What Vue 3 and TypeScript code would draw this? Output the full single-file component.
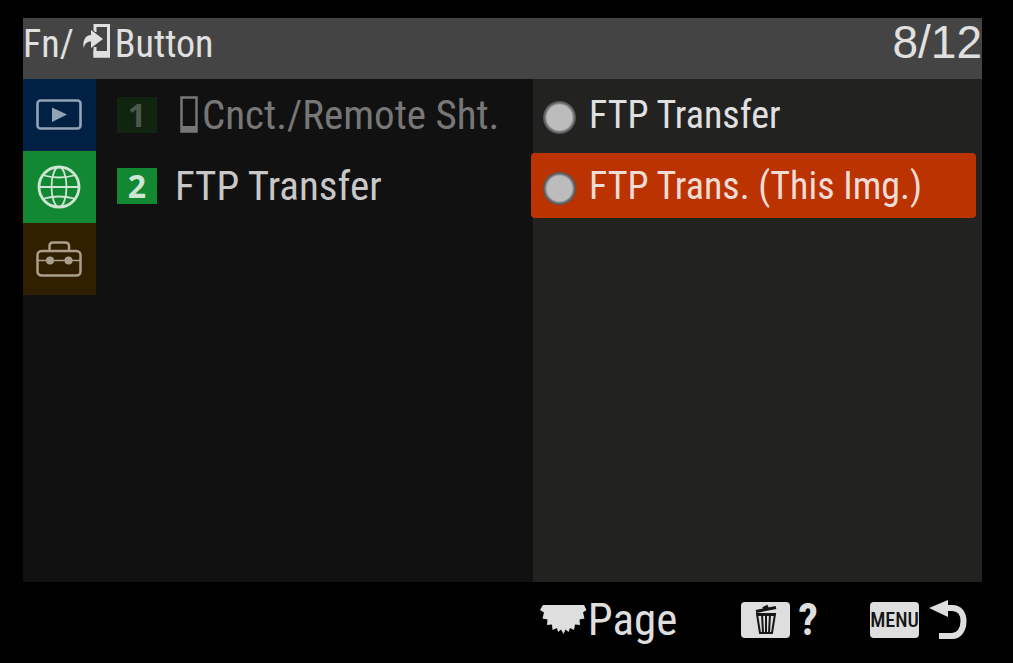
<script setup lang="ts">
import { ref } from 'vue'

interface Option {
  id: string
  label: string
}

const options: Option[] = [
  { id: 'all', label: 'FTP Transfer' },
  { id: 'this', label: 'FTP Trans. (This Img.)' },
]
const selected = ref('this')
</script>

<template>
  <div class="screen">
    <header class="title-bar">
      <h1 class="title">
        <span>Fn/</span>
        <svg class="send-icon" width="28" height="36" viewBox="0 0 28 36" aria-hidden="true">
          <path d="M12 9V2.500H25.500V33H12V24" fill="none" stroke="#e0e0e0" stroke-width="3" />
          <path d="M10.500 28H27V34.500H10.500Z" fill="#e0e0e0" />
          <path
            d="M0.500 25C-0.500 17 3 12 8 12V7L20 16L8 25V18.500C5 18 2 20 0.500 25Z"
            fill="#e0e0e0"
            stroke="#444"
            stroke-width="2"
            paint-order="stroke"
          />
        </svg>
        <span>Button</span>
      </h1>
      <span class="counter">8/12</span>
    </header>

    <main class="content">
      <nav class="tabs" aria-label="Menu groups">
        <button class="tab playback" type="button" aria-label="Playback">
          <svg width="46" height="32" viewBox="0 0 46 32" aria-hidden="true">
            <rect x="1.500" y="1.500" width="43" height="28" rx="3" fill="none" stroke="#93a3b5" stroke-width="2.600" />
            <path d="M16 8.500L31 15.500L16 23Z" fill="#93a3b5" />
          </svg>
        </button>
        <button class="tab network" type="button" aria-label="Network" aria-current="true">
          <svg width="44" height="44" viewBox="0 0 44 44" fill="none" stroke="#d0e5d3" aria-hidden="true">
            <circle cx="22" cy="22" r="20" stroke-width="2.800" />
            <ellipse cx="22" cy="22" rx="7.500" ry="20" stroke-width="1.800" />
            <path d="M2 22H42M7 10.500Q22 14.500 37 10.500M7 33.500Q22 29.500 37 33.500" stroke-width="1.800" />
          </svg>
        </button>
        <button class="tab setup" type="button" aria-label="Setup">
          <svg width="46" height="36" viewBox="0 0 46 36" fill="none" stroke="#ab9e8d" aria-hidden="true">
            <rect x="1.500" y="10" width="43" height="24.500" rx="4" stroke-width="2.500" />
            <path d="M13.500 10V5Q13.500 1.500 17 1.500H29Q33 1.500 33 5V10" stroke-width="2.500" />
            <path d="M2 19.500H44" stroke-width="1.600" />
            <circle cx="14" cy="19.500" r="4" fill="#ab9e8d" stroke="none" />
            <circle cx="32.500" cy="19.500" r="4" fill="#ab9e8d" stroke="none" />
          </svg>
        </button>
      </nav>

      <section class="buttons" aria-label="Button assignments">
        <button class="entry dimmed" type="button" disabled>
          <span class="badge">1</span>
          <svg class="phone-icon" width="18" height="37" viewBox="0 0 18 37" aria-hidden="true">
            <rect x="1.500" y="1.500" width="15" height="34" fill="none" stroke="#777" stroke-width="2.500" />
            <path d="M1 30H17V36H1Z" fill="#777" />
          </svg>
          <span>Cnct./Remote Sht.</span>
        </button>
        <button class="entry" type="button">
          <span class="badge">2</span>
          <span class="entry-name">FTP Transfer</span>
        </button>
      </section>

      <section class="options" aria-label="Functions">
        <label
          v-for="option in options"
          :key="option.id"
          class="option"
          :class="{ active: selected === option.id }"
          :for="option.id"
        >
          <input :id="option.id" v-model="selected" class="dot" type="radio" name="function" :value="option.id" />
          <span>{{ option.label }}</span>
        </label>
      </section>
    </main>

    <footer class="guide">
      <button class="hint" type="button">
        <svg width="48" height="30" viewBox="0 0 48 30" aria-hidden="true">
          <path
            d="M3 0H44L46.500 5L43 7.500L44.500 13.500L39.500 14.500L40 20L35 19.500L34 25L30 23L28.500 27L25.500 24.500L23.500 29L21 24.500L18 27L17 23L12.500 25L12 19.500L7 20L7.500 14.500L2.500 13.500L4 7.500L0 5Z"
            fill="#dedede"
          />
        </svg>
        <span>Page</span>
      </button>
      <button class="hint help" type="button" aria-label="Help">
        <span class="key">
          <svg width="24" height="32" viewBox="0 0 24 32" fill="none" stroke="#151515" aria-hidden="true">
            <path d="M2 7.500L22 3.500M9 4.500L14 2" stroke-width="3" />
            <path d="M3 10L6 29H18L21 10Z" stroke-width="2" />
            <path d="M8 10L9 29M12 10V29M16 10L15 29" stroke-width="2" />
            <path d="M3 11H21" stroke-width="2" />
          </svg>
        </span>
        <span class="question">?</span>
      </button>
      <button class="hint" type="button" aria-label="Menu: back">
        <span class="key menu-key">MENU</span>
        <svg class="back-icon" width="38" height="40" viewBox="0 0 38 40" aria-hidden="true">
          <path d="M0 8L19 0V17Z" fill="#dedede" />
          <path d="M17 8H23C31 8 34.500 14 34.500 21C34.500 30 30 36 23 36H10" fill="none" stroke="#dedede" stroke-width="6" />
        </svg>
      </button>
    </footer>
  </div>
</template>

<style>
body {
  margin: 0;
  background: #000;
}
</style>

<style scoped>
.screen {
  box-sizing: border-box;
  min-height: 100vh;
  padding: 18px 31px 0 23px;
  display: flex;
  flex-direction: column;
  background: #000;
  color: #e0e0e0;
  font-family: "Roboto Condensed", "Liberation Sans Narrow", "Arial Narrow", "Liberation Sans", sans-serif;
  font-size: 38px;
  line-height: 52px;
}

button {
  margin: 0;
  padding: 0;
  border: 0;
  background: none;
  color: inherit;
  font: inherit;
  text-align: left;
}

.title-bar {
  height: 61px;
  display: flex;
  justify-content: space-between;
  background: #444;
}

.title {
  margin: 0;
  display: flex;
  height: 52px;
  font: inherit;
}

.send-icon {
  margin: 5px 4px 0 9px;
}

.counter {
  font-family: "Liberation Sans", sans-serif;
  font-size: 46px;
  line-height: 48px;
}

.content {
  flex: 1;
  display: flex;
  background: #111;
}

.tabs {
  width: 73px;
  flex: none;
}

.tab {
  width: 100%;
  height: 72px;
  padding-right: 2px;
  display: flex;
  align-items: center;
  justify-content: center;
}

.playback {
  background: #002044;
}

.network {
  background: #128832;
}

.setup {
  background: #302000;
}

.buttons {
  flex: 437;
  min-width: 0;
}

.entry {
  width: 100%;
  height: 71px;
  padding-left: 21px;
  display: flex;
  align-items: center;
  font-size: 41px;
  color: #c8c8c8;
  white-space: nowrap;
}

.dimmed {
  color: #777;
}

.badge {
  width: 40px;
  height: 36px;
  background: #128832;
  color: #d0e5d3;
  font-family: "Open Sans", sans-serif;
  font-size: 32px;
  font-weight: 700;
  line-height: 36px;
  text-align: center;
}

.dimmed .badge {
  background: #102410;
  color: #4c5a4c;
}

.phone-icon {
  margin: 0 4px 0 23px;
}

.entry-name {
  margin-left: 18px;
}

.options {
  flex: 449;
  min-width: 0;
  padding-top: 3px;
  display: flex;
  flex-direction: column;
  gap: 6px;
  background: #222221;
}

.option {
  height: 65px;
  margin: 0 6px 0 -2px;
  padding-left: 12px;
  display: flex;
  align-items: center;
  gap: 13px;
  border-radius: 4px;
  white-space: nowrap;
}

.active {
  background: #bb3300;
  color: #f0dcd6;
}

.dot {
  appearance: none;
  flex: none;
  width: 33px;
  height: 33px;
  margin: 6px 0 0;
  border-radius: 50%;
  background: radial-gradient(circle closest-side, #bcbcbc 76%, #707070 88%, #505050 100%);
}

.guide {
  box-sizing: border-box;
  height: 81px;
  display: flex;
  align-items: center;
  justify-content: flex-end;
  gap: 52px;
  padding: 0 15px 6px 0;
}

.hint {
  height: 72px;
  display: flex;
  align-items: center;
  font-size: 45px;
  color: #dedede;
}

.help {
  margin-left: 12px;
}

.key {
  width: 49px;
  height: 36px;
  display: flex;
  align-items: center;
  justify-content: center;
  border-radius: 4px;
  background: #dedede;
  color: #151515;
}

.menu-key {
  font-size: 20px;
  font-weight: 500;
}

.question {
  margin-left: 8px;
  font-size: 44px;
  font-weight: 700;
}

.back-icon {
  margin-left: 10px;
}
</style>
